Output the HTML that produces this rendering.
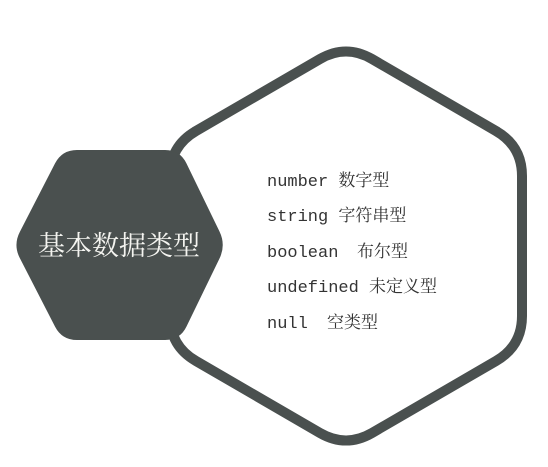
<!DOCTYPE html>
<html><head><meta charset="utf-8"><style>
html,body{margin:0;padding:0;background:#fff;width:548px;height:467px;overflow:hidden}
svg{display:block}
</style></head><body>
<svg width="548" height="467" viewBox="0 0 548 467">
<path d="M320,59 Q346,44 372,59 L496,131 Q522,146 522,176 L522,316 Q522,346 496,361 L372,433 Q346,448 320,433 L196,361 Q170,346 170,316 L170,176 Q170,146 196,131 Z" fill="#fff" stroke="#4a504f" stroke-width="10"/>
<path d="M19.9,231.7 L55.1,163.3 Q62,150 77,150 L165,150 Q180,150 186.5,163.5 L219.5,231.5 Q226,245 219.5,258.5 L186.5,326.5 Q180,340 165,340 L77,340 Q62,340 55.1,326.7 L19.9,258.3 Q13,245 19.9,231.7 Z" fill="#4a504f"/>
<text x="119" y="255" text-anchor="middle" fill="#f4f4f0" font-family="'Noto Serif CJK SC',serif" font-size="27">基本数据类型</text>
<g font-family="'Liberation Mono',monospace" font-size="17" fill="#333" xml:space="preserve">
<text x="267" y="186">number <tspan font-family="'Noto Serif CJK SC',serif">数字型</tspan></text>
<text x="267" y="221">string <tspan font-family="'Noto Serif CJK SC',serif">字符串型</tspan></text>
<text x="267" y="257">boolean   <tspan x="357" font-family="'Noto Serif CJK SC',serif">布尔型</tspan></text>
<text x="267" y="292">undefined <tspan font-family="'Noto Serif CJK SC',serif">未定义型</tspan></text>
<text x="267" y="328">null   <tspan x="327" font-family="'Noto Serif CJK SC',serif">空类型</tspan></text>
</g>
</svg>
</body></html>
